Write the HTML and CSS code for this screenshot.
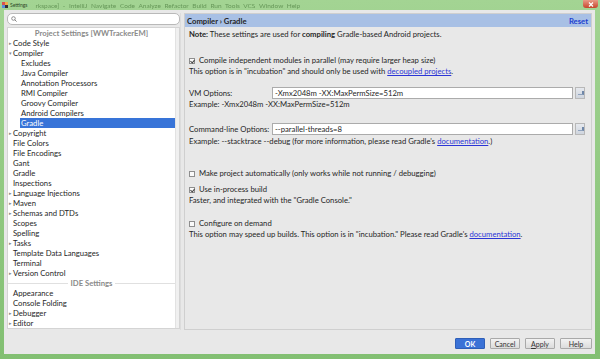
FILE: index.html
```html
<!DOCTYPE html>
<html lang="en">
<head>
    <meta charset="UTF-8">
    <title>Settings</title>
    <link rel="stylesheet" href="styles.css">
</head>
<body>
    <div class="window">
        <div class="titlebar">
            <svg class="app-icon" width="6" height="6" viewBox="0 0 6 6">
                <rect x="0" y="0" width="3" height="3" fill="#d9534f"/>
                <rect x="3" y="0" width="3" height="3" fill="#f0ad4e"/>
                <rect x="0" y="3" width="3" height="3" fill="#5b8dd9"/>
                <rect x="3" y="3" width="3" height="3" fill="#333"/>
            </svg>
            <span class="title">Settings</span>
            <span class="ghost-menu">rkspace] - IntelliJ  Navigate  Code  Analyze  Refactor  Build  Run  Tools  VCS  Window  Help</span>
            <div class="close-btn">
                <svg width="6" height="5" viewBox="0 0 6 5"><path d="M1 0.5 L5 4.5 M5 0.5 L1 4.5" stroke="#fff" stroke-width="1.2"/></svg>
            </div>
        </div>
        <div class="frame">
            <div class="dialog">
                <div class="main">
                    <div class="sidebar">
                        <div class="search">
                            <svg width="6" height="6" viewBox="0 0 6 6"><circle cx="2.5" cy="2.5" r="1.8" fill="none" stroke="#777" stroke-width="0.8"/><path d="M3.8 3.8 L5.6 5.6" stroke="#777" stroke-width="0.9"/></svg>
                        </div>
                        <div class="tree">
                            <div class="tree-rows">
                                <div class="group-title">Project Settings [WWTrackerEM]</div>
                                <div class="tree-item has-arrow">Code Style</div>
                                <div class="tree-item has-arrow open">Compiler</div>
                                <div class="tree-item child">Excludes</div>
                                <div class="tree-item child">Java Compiler</div>
                                <div class="tree-item child">Annotation Processors</div>
                                <div class="tree-item child">RMI Compiler</div>
                                <div class="tree-item child">Groovy Compiler</div>
                                <div class="tree-item child">Android Compilers</div>
                                <div class="tree-item child selected">Gradle</div>
                                <div class="tree-item has-arrow">Copyright</div>
                                <div class="tree-item">File Colors</div>
                                <div class="tree-item">File Encodings</div>
                                <div class="tree-item">Gant</div>
                                <div class="tree-item">Gradle</div>
                                <div class="tree-item">Inspections</div>
                                <div class="tree-item has-arrow">Language Injections</div>
                                <div class="tree-item has-arrow">Maven</div>
                                <div class="tree-item has-arrow">Schemas and DTDs</div>
                                <div class="tree-item">Scopes</div>
                                <div class="tree-item">Spelling</div>
                                <div class="tree-item has-arrow">Tasks</div>
                                <div class="tree-item">Template Data Languages</div>
                                <div class="tree-item">Terminal</div>
                                <div class="tree-item has-arrow">Version Control</div>
                                <div class="group-title lined">IDE Settings</div>
                                <div class="tree-item">Appearance</div>
                                <div class="tree-item">Console Folding</div>
                                <div class="tree-item has-arrow">Debugger</div>
                                <div class="tree-item has-arrow">Editor</div>
                            </div>
                            <div class="scroll-track"></div>
                        </div>
                    </div>
                    <div class="splitter"></div>
                    <div class="panel">
                        <div class="panel-header">
                            <span class="crumb">Compiler › Gradle</span>
                            <span class="reset">Reset</span>
                        </div>
                        <div class="panel-body">
                            <p class="line note"><b>Note:</b> These settings are used for <b>compiling</b> Gradle-based Android projects.</p>

                            <p class="line check-line gap-15"><span class="checkbox checked"></span>Compile independent modules in parallel (may require larger heap size)</p>
                            <p class="line">This option is in "incubation" and should only be used with <a href="#">decoupled projects</a>.</p>

                            <div class="field gap-10">
                                <span class="field-label">VM Options:</span>
                                <span class="input">-Xmx2048m -XX:MaxPermSize=512m</span>
                                <span class="expand-btn"></span>
                            </div>
                            <p class="line">Example: -Xmx2048m -XX:MaxPermSize=512m</p>

                            <div class="field gap-13">
                                <span class="field-label">Command-line Options:</span>
                                <span class="input">--parallel-threads=8</span>
                                <span class="expand-btn"></span>
                            </div>
                            <p class="line gap-1">Example: --stacktrace --debug (for more information, please read Gradle's <a href="#">documentation</a>.)</p>

                            <p class="line check-line gap-21"><span class="checkbox"></span>Make project automatically (only works while not running / debugging)</p>

                            <p class="line check-line gap-5"><span class="checkbox checked"></span>Use in-process build</p>
                            <p class="line">Faster, and integrated with the "Gradle Console."</p>

                            <p class="line check-line gap-12"><span class="checkbox"></span>Configure on demand</p>
                            <p class="line">This option may speed up builds. This option is in "incubation." Please read Gradle's <a href="#">documentation</a>.</p>
                        </div>
                    </div>
                </div>
                <div class="buttons">
                    <button class="btn primary">OK</button>
                    <button class="btn">Cancel</button>
                    <button class="btn"><u>A</u>pply</button>
                    <button class="btn">Help</button>
                </div>
            </div>
        </div>
    </div>
</body>
</html>
```

FILE: styles.css
```css
* {
    margin: 0;
    padding: 0;
    box-sizing: border-box;
}

body {
    width: 600px;
    height: 359px;
    overflow: hidden;
    font-family: Lato, 'Open Sans', sans-serif;
    font-size: 7.7px;
    color: #262626;
    background: #86c276;
}

.window {
    width: 600px;
    height: 359px;
    display: flex;
    flex-direction: column;
    background: linear-gradient(#a3d493, #82bf72);
}

/* title bar (aero glass) */
.titlebar {
    height: 10px;
    display: flex;
    align-items: center;
    position: relative;
    padding-left: 2px;
}

.app-icon {
    margin-right: 2px;
}

.title {
    font-size: 5px;
    color: #2d4a28;
}

.ghost-menu {
    margin-left: 8px;
    font-size: 6.5px;
    color: rgba(40, 90, 30, 0.5);
    filter: blur(0.6px);
    white-space: nowrap;
    word-spacing: 2px;
}

.close-btn {
    position: absolute;
    right: 2px;
    top: 0;
    width: 15px;
    height: 8px;
    background: linear-gradient(#e99a86, #c6452c);
    border-radius: 0 0 3px 3px;
    display: flex;
    align-items: center;
    justify-content: center;
}

.frame {
    flex: 1;
    display: flex;
    padding: 0 5px 5px 4px;
}

.dialog {
    flex: 1;
    background: #e8e8e8;
    display: flex;
    flex-direction: column;
    padding: 3px 3px 5px 3px;
}

.main {
    height: 317px;
    display: flex;
}

/* left side */
.sidebar {
    width: 173px;
    display: flex;
    flex-direction: column;
    gap: 2px;
}

.search {
    height: 12px;
    background: #fff;
    border: 1px solid #b9b9b9;
    border-radius: 5px;
    display: flex;
    align-items: center;
    padding-left: 3px;
}

.tree {
    height: 302px;
    background: #fff;
    border: 1px solid #d4d4d4;
    display: flex;
}

.tree-rows {
    flex: 1;
}

.scroll-track {
    width: 4px;
    background: #f0f0f0;
    border-left: 1px solid #e2e2e2;
}

.group-title {
    height: 10px;
    line-height: 10px;
    text-align: center;
    font-weight: bold;
    color: #8a8a8a;
}

.group-title.lined {
    display: flex;
    align-items: center;
    gap: 3px;
}

.group-title.lined::before,
.group-title.lined::after {
    content: '';
    flex: 1;
    height: 1px;
    background: #e0e0e0;
}

.tree-item {
    height: 10px;
    line-height: 10px;
    padding-left: 5px;
    position: relative;
    white-space: nowrap;
}

.tree-item.has-arrow::before {
    content: '▸';
    position: absolute;
    left: 1px;
    top: 0;
    font-size: 5px;
    color: #888;
}

.tree-item.open::before {
    content: '▾';
}

.tree-item.child {
    padding-left: 13px;
}

.tree-item.selected {
    margin-left: 12px;
    padding-left: 1px;
    background: #3874d8;
    color: #fff;
}

.splitter {
    width: 4px;
    border-left: 1px solid #dcdcdc;
}

/* right side */
.panel {
    flex: 1;
    border: 1px solid #cfcfcf;
    display: flex;
    flex-direction: column;
}

.panel-header {
    height: 13px;
    background: #a8c0e5;
    display: flex;
    align-items: center;
    justify-content: space-between;
    padding: 0 3px 0 2px;
    font-weight: bold;
}

.reset {
    color: #1c3fd0;
}

.panel-body {
    padding: 2px 6px 0 4px;
}

.line {
    height: 11px;
    line-height: 11px;
    white-space: nowrap;
}

.line a {
    color: #2b35d6;
}

.check-line {
    display: flex;
    align-items: center;
}

.checkbox {
    width: 6px;
    height: 6px;
    border: 1px solid #8e8e8e;
    background: #fafafa;
    margin-right: 4px;
    position: relative;
}

.checkbox.checked::after {
    content: '';
    position: absolute;
    left: 1px;
    top: 0;
    width: 2px;
    height: 3px;
    border: solid #444;
    border-width: 0 1px 1px 0;
    transform: rotate(40deg);
}

.gap-1 { margin-top: 1px; }
.gap-5 { margin-top: 5px; }
.gap-10 { margin-top: 10px; }
.gap-12 { margin-top: 12px; }
.gap-13 { margin-top: 13px; }
.gap-15 { margin-top: 15px; }
.gap-21 { margin-top: 21px; }

.field {
    height: 12px;
    display: flex;
    align-items: center;
}

.field-label {
    width: 83px;
}

.input {
    width: 301px;
    height: 12px;
    line-height: 10px;
    background: #fff;
    border: 1px solid #ababab;
    padding-left: 2px;
}

.expand-btn {
    width: 10px;
    height: 12px;
    margin-left: 2px;
    background: linear-gradient(#e6e9ee, #cfd5de);
    border: 1px solid #b8b8b8;
    position: relative;
}

.expand-btn::after {
    content: '';
    position: absolute;
    left: 2px;
    top: 3px;
    width: 4px;
    height: 3px;
    border-right: 2px solid #6f87a8;
    border-bottom: 1px solid #8fa2bd;
}

/* dialog buttons */
.buttons {
    margin-top: 8px;
    height: 11px;
    display: flex;
    justify-content: flex-end;
    gap: 5px;
}

.btn {
    width: 30px;
    height: 11px;
    font-family: inherit;
    font-size: 7px;
    color: #333;
    background: linear-gradient(#f2f2f2, #dcdcdc);
    border: 1px solid #a9a9a9;
    border-radius: 1px;
}

.btn:last-child {
    width: 32px;
}

.btn.primary {
    background: #3b72d6;
    border-color: #2f5fb8;
    color: #fff;
    font-weight: bold;
}
```
